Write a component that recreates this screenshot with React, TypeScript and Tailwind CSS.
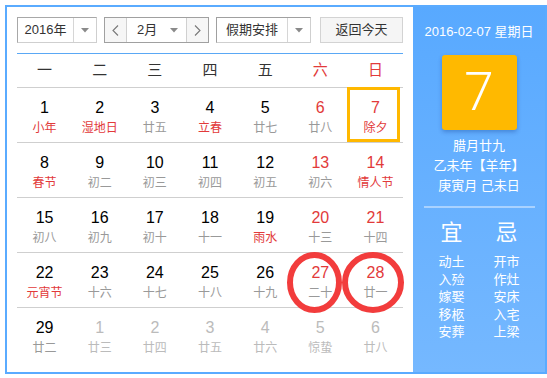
import React from "react";

type Day = { n: number; l: string; festive?: boolean; other?: boolean; today?: boolean };

const weeks: Day[][] = [
  [
    { n: 1, l: "小年", festive: true },
    { n: 2, l: "湿地日", festive: true },
    { n: 3, l: "廿五" },
    { n: 4, l: "立春", festive: true },
    { n: 5, l: "廿七" },
    { n: 6, l: "廿八" },
    { n: 7, l: "除夕", festive: true, today: true },
  ],
  [
    { n: 8, l: "春节", festive: true },
    { n: 9, l: "初二" },
    { n: 10, l: "初三" },
    { n: 11, l: "初四" },
    { n: 12, l: "初五" },
    { n: 13, l: "初六" },
    { n: 14, l: "情人节", festive: true },
  ],
  [
    { n: 15, l: "初八" },
    { n: 16, l: "初九" },
    { n: 17, l: "初十" },
    { n: 18, l: "十一" },
    { n: 19, l: "雨水", festive: true },
    { n: 20, l: "十三" },
    { n: 21, l: "十四" },
  ],
  [
    { n: 22, l: "元宵节", festive: true },
    { n: 23, l: "十六" },
    { n: 24, l: "十七" },
    { n: 25, l: "十八" },
    { n: 26, l: "十九" },
    { n: 27, l: "二十" },
    { n: 28, l: "廿一" },
  ],
  [
    { n: 29, l: "廿二" },
    { n: 1, l: "廿三", other: true },
    { n: 2, l: "廿四", other: true },
    { n: 3, l: "廿五", other: true },
    { n: 4, l: "廿六", other: true },
    { n: 5, l: "惊蛰", other: true },
    { n: 6, l: "廿八", other: true },
  ],
];

const weekdays = ["一", "二", "三", "四", "五", "六", "日"];
const yi = ["动土", "入殓", "嫁娶", "移柩", "安葬"];
const ji = ["开市", "作灶", "安床", "入宅", "上梁"];

const Caret = () => (
  <svg width="8" height="5" viewBox="0 0 8 5">
    <path d="M0 0 L8 0 L4 4.5 Z" fill="#8a8a8a" />
  </svg>
);

const Chevron = ({ dir }: { dir: "l" | "r" }) => (
  <svg width="7" height="11" viewBox="0 0 7 11">
    <polyline
      points={dir === "l" ? "6,0.5 1,5.5 6,10.5" : "1,0.5 6,5.5 1,10.5"}
      fill="none"
      stroke="#777"
      strokeWidth="1.1"
    />
  </svg>
);

export default function App() {
  return (
    <div className="relative h-[378px] w-[547px] overflow-hidden bg-white p-[5px] font-['Liberation_Sans','Noto_Sans_CJK_SC',sans-serif]">
      <div className="flex h-[369px] w-[542px] border-2 border-[#5aabff]">
        {/* left: calendar */}
        <div className="w-[406px] px-[10px] pt-[10px]">
          <div className="flex h-[26px] whitespace-nowrap text-[13px] text-[#333]">
            <div className="flex w-[80px] border border-[#a8a8a8] border-b-[#cfcfcf] border-r-[#cfcfcf]">
              <div className="flex w-[55px] items-center justify-center">2016年</div>
              <div className="flex flex-1 items-center justify-center border-l border-[#d6d6d6]">
                <Caret />
              </div>
            </div>
            <div className="ml-[7px] flex w-[105px] border border-[#a0a0a0]">
              <div className="flex w-[22px] items-center justify-center border-r border-[#d0d0d0] bg-[#f6f6f6]">
                <Chevron dir="l" />
              </div>
              <div className="flex flex-1 items-center pl-[10px]">
                <span>2月</span>
                <span className="ml-[13px] flex">
                  <Caret />
                </span>
              </div>
              <div className="flex w-[22px] items-center justify-center border-l border-[#d0d0d0] bg-[#f6f6f6]">
                <Chevron dir="r" />
              </div>
            </div>
            <div className="ml-[7px] flex w-[95px] border border-[#a0a0a0] border-b-[#cfcfcf] border-r-[#cfcfcf]">
              <div className="flex w-[70px] items-center justify-center">假期安排</div>
              <div className="flex flex-1 items-center justify-center border-l border-[#d6d6d6]">
                <Caret />
              </div>
            </div>
            <div className="ml-[9px] flex w-[83px] items-center justify-center border border-[#d3d3d3] bg-[#f5f5f5]">
              返回今天
            </div>
          </div>

          <div className="mt-[10px] h-px bg-[#5aa8f5]" />

          <div className="grid h-[34px] grid-cols-7 border-b border-[#cfcfcf] text-[15px]">
            {weekdays.map((w, i) => (
              <div
                key={w}
                className={`flex items-center justify-center ${i >= 5 ? "text-[#e23a3a]" : "text-[#333]"}`}
              >
                {w}
              </div>
            ))}
          </div>

          {weeks.map((row, r) => (
            <div
              key={r}
              className={`grid h-[55px] grid-cols-7 ${r < 4 ? "border-b border-[#cfcfcf]" : ""}`}
            >
              {row.map((d, c) => {
                const weekend = c >= 5;
                const numColor = d.other ? "text-[#bbbbbb]" : weekend ? "text-[#e23a3a]" : "text-black";
                const lunColor = d.other ? "text-[#bbbbbb]" : d.festive ? "text-[#e23a3a]" : "text-[#999]";
                return (
                  <div key={c} className="relative flex flex-col items-center pt-[10px]">
                    <div className={`h-[20px] text-[16px] leading-[20px] ${numColor}`}>{d.n}</div>
                    <div className={`mt-[2px] text-[12px] leading-[16px] ${lunColor}`}>{d.l}</div>
                    {d.today && (
                      <div className="absolute -top-px bottom-0 left-[-1px] right-[3px] border-[3px] border-[#ffb800]" />
                    )}
                  </div>
                );
              })}
            </div>
          ))}
        </div>

        {/* right: detail panel */}
        <div className="flex flex-1 flex-col items-center bg-gradient-to-b from-[#58a9ff] to-[#75b8ff] pt-[16px] text-white">
          <div className="text-[13px] leading-[18px]">2016-02-07 星期日</div>
          <div className="mt-[14px] flex h-[75px] w-[75px] items-center justify-center rounded-[3px] bg-[#ffb900] shadow-[0_2px_4px_rgba(0,40,120,0.3)]">
            <span className="font-['Roboto',sans-serif] text-[53px] font-light leading-none">7</span>
          </div>
          <div className="mt-[6px] text-[13px] leading-[20px]">腊月廿九</div>
          <div className="text-[13px] leading-[20px]">乙未年【羊年】</div>
          <div className="text-[13px] leading-[20px]">庚寅月 己未日</div>
          <div className="mt-[10px] h-[2px] w-[111px] bg-[#a9d2ff]" />
          <div className="mt-[12px] grid grid-cols-[55px_55px] text-center">
            <div className="text-[22px] leading-[26px]">宜</div>
            <div className="text-[22px] leading-[26px]">忌</div>
            <div className="mt-[7px] text-[13px] leading-[17.5px]">
              {yi.map((t) => (
                <div key={t}>{t}</div>
              ))}
            </div>
            <div className="mt-[7px] text-[13px] leading-[17.5px]">
              {ji.map((t) => (
                <div key={t}>{t}</div>
              ))}
            </div>
          </div>
        </div>
      </div>

      {/* hand-drawn annotation circles */}
      <svg className="pointer-events-none absolute left-0 top-0" width="547" height="378">
        <ellipse cx="314.5" cy="282.5" rx="24.5" ry="27.5" fill="none" stroke="#f23c3c" strokeWidth="6" />
        <ellipse cx="373" cy="282.5" rx="28" ry="27.5" fill="none" stroke="#f23c3c" strokeWidth="6" />
      </svg>
    </div>
  );
}
